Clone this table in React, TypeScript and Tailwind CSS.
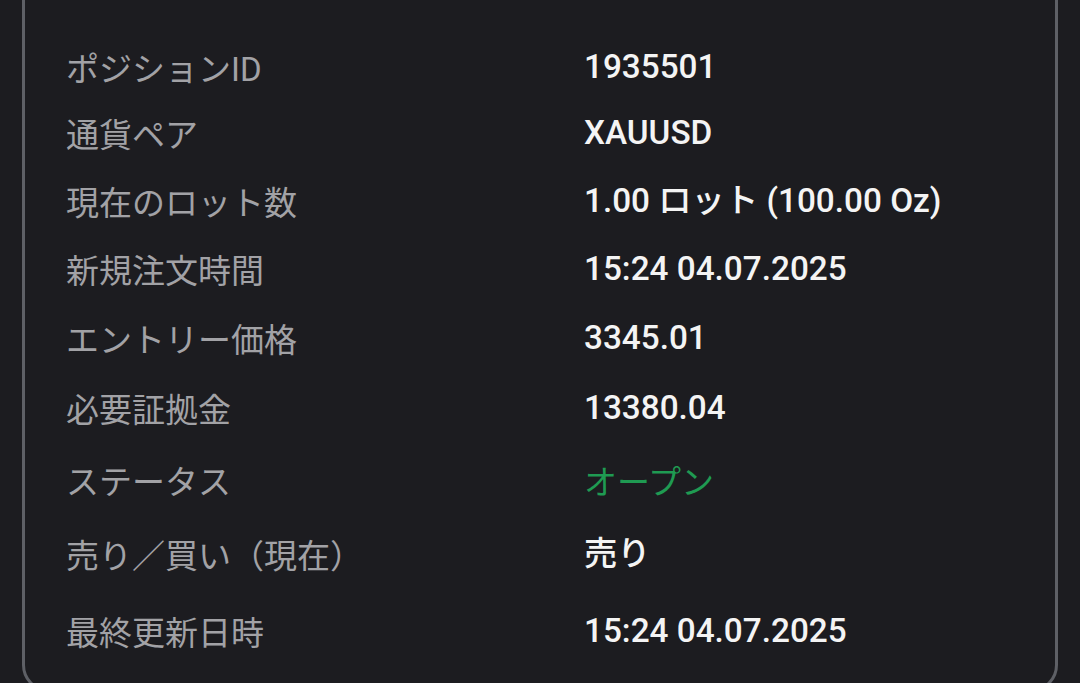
import React from "react";

type Row = { label: string; value: string; h: string; green?: boolean };

const rows: Row[] = [
  { label: "ポジションID", value: "1935501", h: "h-[66px]" },
  { label: "通貨ペア", value: "XAUUSD", h: "h-[67px]" },
  { label: "現在のロット数", value: "1.00 ロット (100.00 Oz)", h: "h-[68px]" },
  { label: "新規注文時間", value: "15:24 04.07.2025", h: "h-[69px]" },
  { label: "エントリー価格", value: "3345.01", h: "h-[69px]" },
  { label: "必要証拠金", value: "13380.04", h: "h-[71px]" },
  { label: "ステータス", value: "オープン", h: "h-[72px]", green: true },
  { label: "売り／買い（現在）", value: "売り", h: "h-[76px]" },
  { label: "最終更新日時", value: "15:24 04.07.2025", h: "h-[78px]" },
];

export default function App() {
  return (
    <div
      className="h-[683px] w-[1080px] overflow-hidden bg-[#1c1c20] px-[22px]"
      style={{ fontFamily: "Roboto, 'Noto Sans CJK JP', sans-serif" }}
    >
      <div className="-mt-[30px] rounded-[27px] border-[3px] border-[#5e6066] pl-[41px] pr-[40px] pt-[63px] pb-[17px]">
        {rows.map((r) => (
          <div key={r.label} className={`grid grid-cols-[518px_1fr] items-center ${r.h}`}>
            <div className="text-[33px] leading-none text-[#a2a2a6]">{r.label}</div>
            <div
              className={
                r.green
                  ? "text-[33px] leading-none text-[#1f9a52]"
                  : "pb-[5px] text-[33.3px] leading-none font-medium text-[#f4f4f4]"
              }
            >
              {r.value}
            </div>
          </div>
        ))}
      </div>
    </div>
  );
}
